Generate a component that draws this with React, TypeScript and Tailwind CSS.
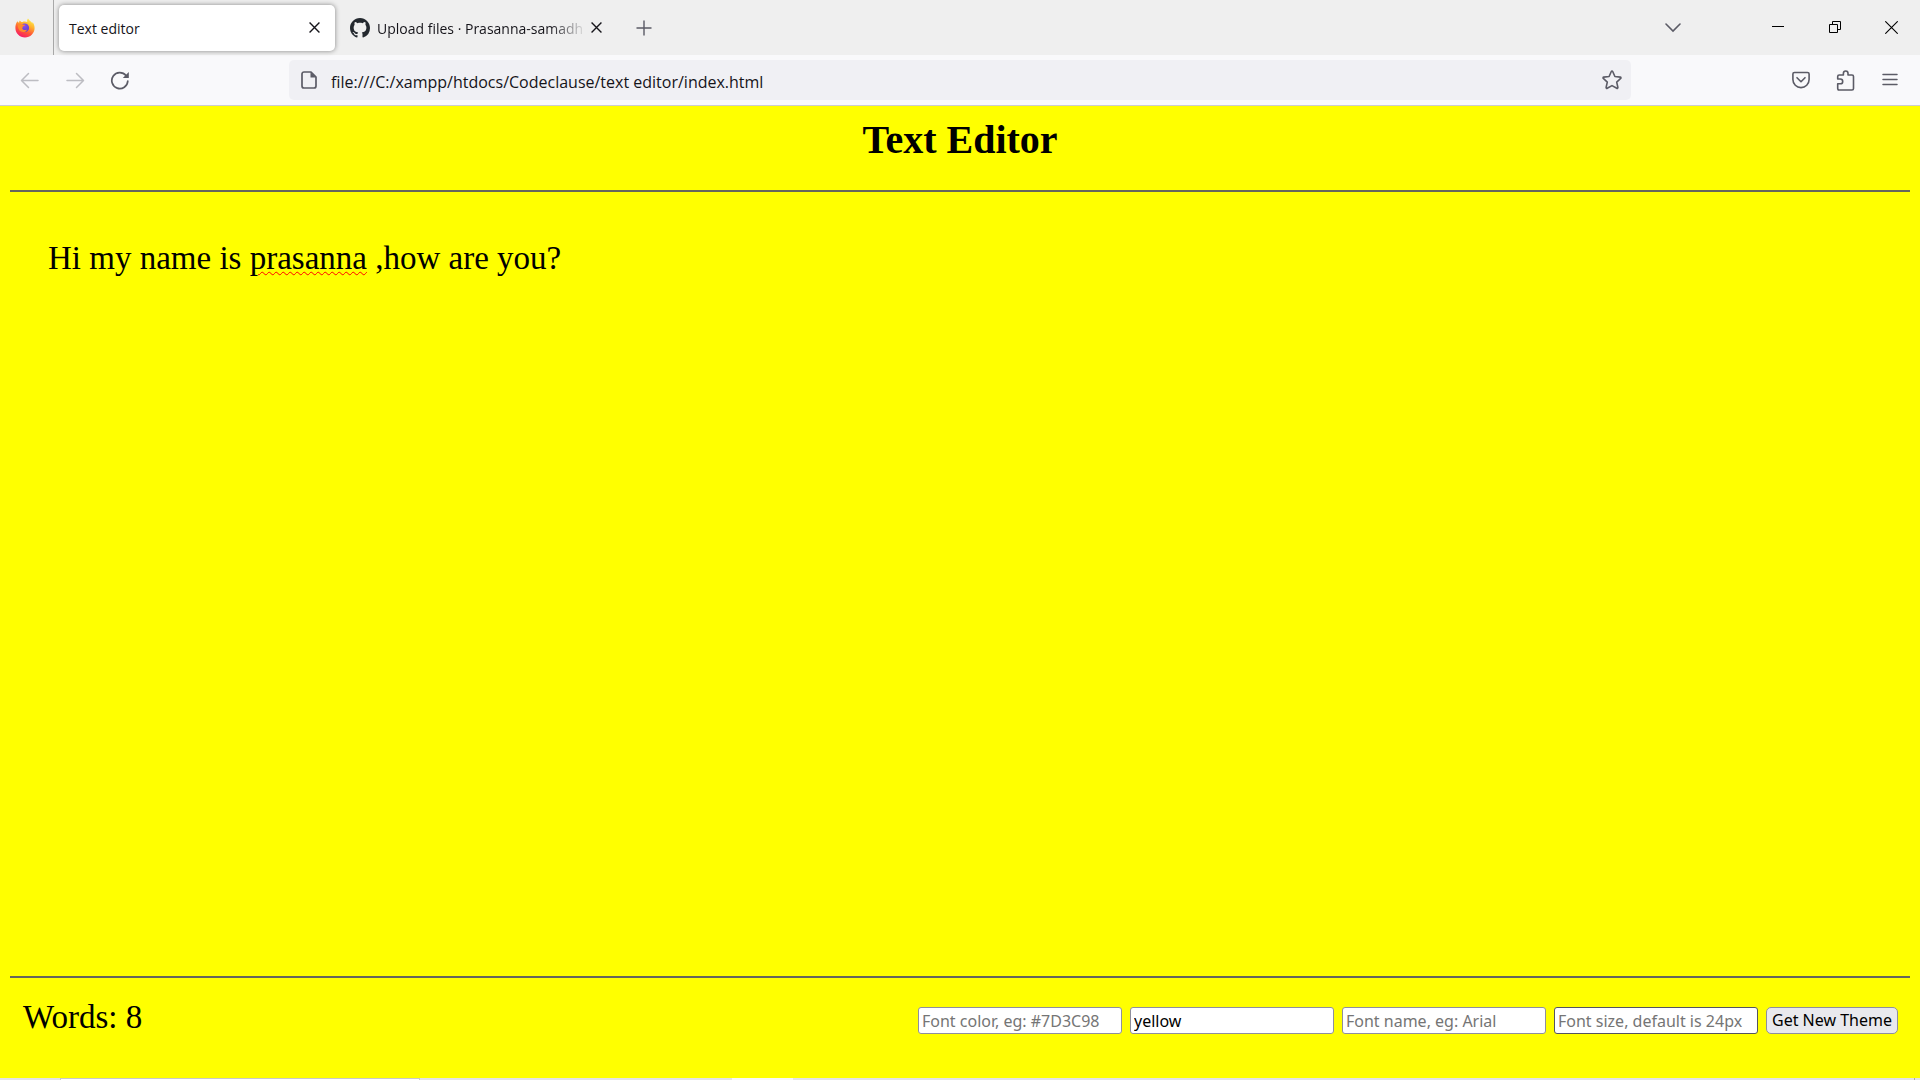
import React, { useState } from "react";

function FirefoxLogo() {
  return (
    <svg width="20" height="20" viewBox="0 0 20 20" aria-hidden="true">
      <defs>
        <linearGradient id="flame" x1="0.8" y1="0" x2="0.3" y2="1">
          <stop offset="0" stopColor="#fff44f" />
          <stop offset="0.35" stopColor="#ffb02e" />
          <stop offset="0.65" stopColor="#ff5a36" />
          <stop offset="1" stopColor="#f5156c" />
        </linearGradient>
        <radialGradient id="globe" cx="0.5" cy="0.3" r="0.8">
          <stop offset="0" stopColor="#8a4bf0" />
          <stop offset="1" stopColor="#5b3fc4" />
        </radialGradient>
      </defs>
      <path
        d="M13 0.5c-1 1.300-1.100 2.600-.6 3.600C11 3.300 9 3.200 7.500 3.900 6.200 4 5.300 3.200 4.800 2.400c-.6.700-.8 1.600-.7 2.400-.7-.2-1.200-.8-1.600-1.500C.9 5.200.3 7.600.4 10.300c.2 5.200 4.400 9.300 9.600 9.300s9.600-4.200 9.600-9.500c0-2.800-1-4.900-2.200-6.200.1.700.1 1.200 0 1.700C16.300 3.300 14 2.500 13 .5z"
        fill="url(#flame)"
      />
      <circle cx="9.800" cy="9.700" r="4.300" fill="url(#globe)" />
      <path
        d="M3 6.800c1.500-1.200 3.400-1.200 4.700-.4.900.1 1.800.2 2.300.3 0 1-1.200 1.500-2.300 1.900.1.600 0 1.400-.5 1.900.8 1.800 3.300 2 4.900.9-.7 2.400-3.900 3.300-6.500 1.900C3.600 12.200 2.600 9.500 3 6.800z"
        fill="#ff8a2b"
      />
    </svg>
  );
}

function GithubMark() {
  return (
    <svg width="20" height="20" viewBox="0 0 16 16" fill="#24292f" className="shrink-0" aria-hidden="true">
      <path d="M8 0C3.580 0 0 3.580 0 8c0 3.540 2.290 6.530 5.470 7.590.4.070.55-.17.55-.38 0-.19-.01-.82-.01-1.490-2.010.37-2.530-.49-2.690-.94-.09-.23-.48-.94-.82-1.130-.28-.15-.68-.52-.01-.53.63-.01 1.080.58 1.230.82.72 1.210 1.870.87 2.330.66.07-.52.28-.87.51-1.070-1.780-.2-3.640-.89-3.640-3.950 0-.87.31-1.590.82-2.150-.08-.2-.36-1.020.08-2.120 0 0 .67-.21 2.200.82.64-.18 1.320-.27 2-.27s1.360.09 2 .27c1.530-1.040 2.200-.82 2.200-.82.44 1.100.16 1.920.08 2.120.51.56.82 1.270.82 2.150 0 3.070-1.870 3.750-3.650 3.950.29.25.54.73.54 1.480 0 1.070-.01 1.930-.01 2.200 0 .21.15.46.55.38A8.010 8.010 0 0 0 16 8c0-4.420-3.580-8-8-8z" />
    </svg>
  );
}

function CloseIcon({ size }: { size: number }) {
  return (
    <svg width={size} height={size} viewBox="0 0 12 12" fill="none" stroke="#15141a" strokeWidth="1.500" aria-hidden="true">
      <path d="M.6.6l10.800 10.800M11.400.6L.6 11.400" />
    </svg>
  );
}

function TabStrip() {
  return (
    <div className="flex h-[55px] items-center bg-[#efefef] font-['Open_Sans',sans-serif] text-[14px] text-[#15141a]">
      <div className="flex h-full w-[54px] shrink-0 items-center border-r border-[#a8a8a8] pl-[15px]">
        <FirefoxLogo />
      </div>
      <div className="ml-[5px] flex h-[46px] w-[276px] shrink-0 items-center justify-between rounded-[5px] bg-white pr-[15px] pl-[10px] shadow-[0_0_5px_rgba(0,0,0,0.45)]">
        <span className="pt-[2px]">Text editor</span>
        <button type="button" aria-label="Close Text editor tab">
          <CloseIcon size={11} />
        </button>
      </div>
      <div className="ml-[15px] flex h-[46px] w-[253px] shrink-0 items-center">
        <GithubMark />
        <span className="ml-[7px] w-[210px] whitespace-nowrap pt-[2px] [mask-image:linear-gradient(to_right,#000_82%,transparent)]">
          Upload files · Prasanna-samadh
        </span>
        <button type="button" aria-label="Close Upload files tab" className="ml-[4px] shrink-0">
          <CloseIcon size={11} />
        </button>
      </div>
      <button type="button" aria-label="New tab" className="ml-[33px]">
        <svg width="16" height="16" viewBox="0 0 16 16" fill="none" stroke="#5b5b66" strokeWidth="1.400" aria-hidden="true">
          <path d="M8 .5v15M.5 8h15" />
        </svg>
      </button>
      <button type="button" aria-label="List all tabs" className="ml-auto">
        <svg width="16" height="16" viewBox="0 0 16 16" fill="none" stroke="#5b5b66" strokeWidth="1.600" strokeLinecap="round" aria-hidden="true">
          <path d="M1 4l7 7 7-7" />
        </svg>
      </button>
      <div className="mr-[22px] ml-[90px] flex items-center gap-[44px]">
        <button type="button" aria-label="Minimize">
          <svg width="13" height="13" viewBox="0 0 13 13" stroke="#000" aria-hidden="true">
            <path d="M1 5.500h12" />
          </svg>
        </button>
        <button type="button" aria-label="Restore">
          <svg width="13" height="13" viewBox="0 0 13 13" fill="none" stroke="#000" aria-hidden="true">
            <path d="M1.500 3.500h8v8h-8zM4.500 3.500v-3h8v8h-3" />
          </svg>
        </button>
        <button type="button" aria-label="Close window">
          <svg width="13" height="13" viewBox="0 0 13 13" fill="none" stroke="#000" strokeWidth="1.100" aria-hidden="true">
            <path d="M.3.3l12.400 12.400M12.700.3L.3 12.700" />
          </svg>
        </button>
      </div>
    </div>
  );
}

function NavBar() {
  return (
    <div className="flex h-[51px] items-center border-b border-[#cccccf] bg-[#f9f9fb]">
      <div className="flex w-[289px] shrink-0 items-center gap-[25px] pl-[20px]">
        <button type="button" aria-label="Back" disabled>
          <svg width="20" height="20" viewBox="0 0 20 20" fill="none" stroke="#bdbdc2" strokeWidth="1.500" strokeLinecap="round" strokeLinejoin="round" aria-hidden="true">
            <path d="M18 10.500H2M8.500 3.500L1.500 10.500l7 7" />
          </svg>
        </button>
        <button type="button" aria-label="Forward" disabled>
          <svg width="20" height="20" viewBox="0 0 20 20" fill="none" stroke="#bdbdc2" strokeWidth="1.500" strokeLinecap="round" strokeLinejoin="round" aria-hidden="true">
            <path d="M2 10.500h16M11.500 3.500l7 7-7 7" />
          </svg>
        </button>
        <button type="button" aria-label="Reload">
          <svg width="20" height="20" viewBox="0 0 20 20" fill="none" stroke="#5b5b66" strokeWidth="1.700" strokeLinecap="round" aria-hidden="true">
            <path d="M16 5.500A8 8 0 1 0 17.800 11" />
            <path d="M18.800 2v6h-6z" fill="#5b5b66" stroke="none" />
          </svg>
        </button>
      </div>
      <div className="mr-[161px] flex h-[40px] flex-1 items-center rounded-[5px] bg-[#f0f0f4] pr-[9px] pl-[12px]">
        <svg width="16" height="18" viewBox="0 0 16 18" fill="none" stroke="#5b5b66" strokeWidth="1.700" strokeLinejoin="round" aria-hidden="true">
          <path d="M10 1H3a2 2 0 0 0-2 2v12a2 2 0 0 0 2 2h10a2 2 0 0 0 2-2V6z" />
          <path d="M9.500 1v5.500H15z" fill="#5b5b66" stroke="none" />
        </svg>
        <input
          aria-label="Address"
          readOnly
          value="file:///C:/xampp/htdocs/Codeclause/text editor/index.html"
          className="ml-[14px] min-w-0 flex-1 bg-transparent pt-[3px] font-['Open_Sans',sans-serif] text-[16px] text-[#15141a] outline-none"
        />
        <button type="button" aria-label="Bookmark this page">
          <svg width="20" height="20" viewBox="0 0 20 20" fill="none" stroke="#5b5b66" strokeWidth="1.600" strokeLinejoin="round" aria-hidden="true">
            <path d="M9.300 1.500c.3-.6 1.100-.6 1.400 0l2.200 5 5.400.6c.7.100.9.900.4 1.300l-4 3.700 1.200 5.400c.1.600-.6 1.100-1.100.8L10 15.600l-4.800 2.700c-.5.300-1.200-.2-1.100-.8l1.200-5.400-4-3.700c-.5-.4-.3-1.200.4-1.300l5.400-.6z" />
          </svg>
        </button>
      </div>
      <div className="flex shrink-0 items-center gap-[26px] pr-[22px]">
        <button type="button" aria-label="Save to Pocket">
          <svg width="18" height="18" viewBox="0 0 18 18" fill="none" stroke="#5b5b66" strokeWidth="1.600" strokeLinecap="round" strokeLinejoin="round" aria-hidden="true">
            <path d="M2.500 1.500h13a1.600 1.600 0 0 1 1.600 1.600v5.400a8.100 8.100 0 0 1-16.200 0V3.100a1.600 1.600 0 0 1 1.600-1.600z" />
            <path d="M5 6.700l4 4 4-4" />
          </svg>
        </button>
        <button type="button" aria-label="Extensions">
          <svg width="20" height="22" viewBox="0 0 20 22" fill="none" stroke="#5b5b66" strokeWidth="1.600" strokeLinejoin="round" aria-hidden="true">
            <path d="M2 20.500a1 1 0 0 0 1 .5h13a1.500 1.500 0 0 0 1.500-1.500v-12A1.500 1.500 0 0 0 16 6h-4V4.300a2.300 2.300 0 0 0-4.600 0V6H3.200A1.500 1.500 0 0 0 1.700 7.500V10h2.600a2.400 2.400 0 0 1 0 4.800H1.700v4.700z" />
          </svg>
        </button>
        <button type="button" aria-label="Open application menu">
          <svg width="16" height="16" viewBox="0 0 16 16" stroke="#5b5b66" strokeWidth="1.500" strokeLinecap="round" aria-hidden="true">
            <path d="M1 2.500h14M1 7.500h14M1 12.500h14" />
          </svg>
        </button>
      </div>
    </div>
  );
}

function ThemeField({ label, value = "", dark = false }: { label: string; value?: string; dark?: boolean }) {
  const [text, setText] = useState(value);
  return (
    <input
      type="text"
      aria-label={label}
      placeholder={label}
      value={text}
      onChange={(e) => setText(e.target.value)}
      className={
        "h-[27px] w-[204px] rounded-[3px] border bg-white px-[3px] text-black outline-none placeholder:text-[#757575] " +
        (dark ? "border-[#55555f]" : "border-[#8f8f9d]")
      }
    />
  );
}

function TaskbarEdge() {
  return (
    <div className="flex h-[2px] bg-[#e3e3e6]">
      <div className="ml-[60px] w-[360px] border-x border-t border-[#c8c8cc] bg-white" />
      <div className="ml-[312px] w-[61px] bg-[#f8f8f8]" />
      <div className="mr-[5px] ml-auto w-px bg-[#a8a8a8]" />
    </div>
  );
}

export default function App() {
  return (
    <div className="flex min-h-screen flex-col bg-[#ffff00] font-['Noto_Sans','Open_Sans',sans-serif]">
      <header>
        <TabStrip />
        <NavBar />
      </header>
      <main className="flex flex-1 flex-col px-[10px] text-black">
        <h1 className="pt-[10px] text-center font-['Liberation_Serif',serif] text-[40px] leading-[48px] font-bold">
          Text Editor
        </h1>
        <hr className="mt-[26px] border-t-2 border-[#66665c]" />
        <div
          contentEditable
          suppressContentEditableWarning
          spellCheck={false}
          role="textbox"
          aria-label="Document"
          className="flex-1 px-[38px] pt-[44px] font-['Liberation_Serif',serif] text-[33px] leading-[44px] outline-none"
        >
          Hi my name is{" "}
          <span className="underline decoration-[#ff0000] decoration-wavy decoration-1 underline-offset-2">prasanna</span> ,how are you?
        </div>
        <hr className="border-t-2 border-[#66665c]" />
        <footer className="flex h-[100px] items-start justify-between pr-[12px] pl-[13px]">
          <p className="pt-[17px] font-['Liberation_Serif',serif] text-[33px] leading-[44px]">Words: 8</p>
          <form className="flex items-center gap-2 pt-[29px] text-[16px]" onSubmit={(e) => e.preventDefault()}>
            <ThemeField label="Font color, eg: #7D3C98" />
            <ThemeField label="Background color" value="yellow" />
            <ThemeField label="Font name, eg: Arial" />
            <ThemeField label="Font size, default is 24px" dark />
            <button type="submit" className="h-[27px] rounded-[5px] border border-[#8f8f9d] bg-[#e9e9ed] px-[5px] leading-[25px] whitespace-nowrap">
              Get New Theme
            </button>
          </form>
        </footer>
      </main>
      <TaskbarEdge />
    </div>
  );
}
